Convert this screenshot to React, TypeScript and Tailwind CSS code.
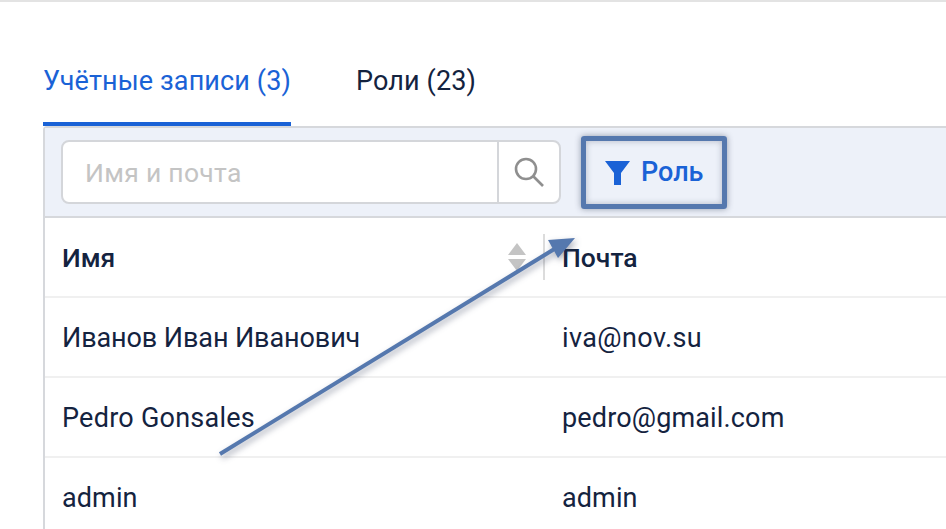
import React from 'react';

const rows = [
  { name: 'Иванов Иван Иванович', mail: 'iva@nov.su', nameClass: 'tracking-[-0.1px]', mailClass: 'tracking-[0.4px]' },
  { name: 'Pedro Gonsales', mail: 'pedro@gmail.com', nameClass: 'tracking-[0.25px]', mailClass: 'tracking-[0.15px]' },
  { name: 'admin', mail: 'admin', nameClass: 'tracking-[0.1px]', mailClass: 'tracking-[0.1px]' },
];

export default function App() {
  return (
    <div className="relative w-[946px] h-[529px] overflow-hidden bg-white font-['Roboto',sans-serif] text-[#14233f]">
      <div className="h-[2px] bg-[#e3e3e3]" />

      {/* Tabs */}
      <div className="flex pl-[43px] pt-[55px] gap-[65px] text-[27px] leading-[48px] tracking-[0.12px]">
        <div className="h-[69px] border-b-[4px] border-[#1a62d6] text-[#1a62d6]">Учётные записи (3)</div>
        <div className="h-[69px]">Роли (23)</div>
      </div>

      {/* Panel */}
      <div className="ml-[43px] border-l-[2px] border-t-[2px] border-[#d6d8dc] rounded-tl-[4px]">
        <div className="flex items-center h-[90px] pl-[16px] bg-[#edf1f9] border-b-[2px] border-[#d6d8dc]">
          <div className="flex w-[500px] h-[64px] bg-white border-[2px] border-[#d4d6da] rounded-[8px]">
            <div className="flex-1 pl-[22px] text-[26.5px] leading-[62px] text-[#c4c4c4] tracking-[0.3px]">Имя и почта</div>
            <div className="flex items-center justify-center w-[62px] border-l-[2px] border-[#d4d6da]">
              <svg width="32" height="32" viewBox="0 0 32 32" fill="none" stroke="#8f8f8f" strokeWidth="2.6">
                <circle cx="13" cy="13" r="10" />
                <path d="M20.5 20.5L30 30" />
              </svg>
            </div>
          </div>
          <div className="flex items-center ml-[20px] w-[146px] h-[73px] pl-[19px] gap-[11px] border-[5px] border-[#5578ae] rounded-[3px] shadow-[0_0_6px_rgba(40,50,80,0.45),inset_0_0_6px_rgba(40,50,80,0.3)] text-[27px] font-medium text-[#1a62d6]">
            <svg width="25" height="25" viewBox="0 0 25 25" fill="#1a62d6">
              <path d="M0 1H25L16 13V25H9V13Z" />
            </svg>
            Роль
          </div>
        </div>

        {/* Table */}
        <div className="flex h-[80px] items-center border-b-[2px] border-[#f0f0f0] text-[26.5px] font-medium">
          <div className="relative flex items-center w-[500px] h-[46px] pl-[17px] pt-[2px]">
            Имя
            <svg className="absolute left-[462px] top-[9px]" width="20" height="28" viewBox="0 0 20 28" fill="#c4c4c4">
              <path d="M10 0L19 12H1Z" />
              <path d="M1 16H19L10 28Z" />
            </svg>
            <div className="absolute right-0 top-0 w-[2px] h-[46px] bg-[#dcdcdc]" />
          </div>
          <div className="pl-[17px] pt-[2px]">Почта</div>
        </div>
        {rows.map((row) => (
          <div key={row.name} className="flex h-[80px] items-center pt-[2px] border-b-[2px] border-[#f0f0f0] text-[27px]">
            <div className={`w-[500px] pl-[17px] ${row.nameClass}`}>{row.name}</div>
            <div className={`pl-[17px] ${row.mailClass}`}>{row.mail}</div>
          </div>
        ))}
      </div>

      {/* Annotation arrow */}
      <svg className="absolute left-0 top-0 drop-shadow-[2px_3px_3px_rgba(40,50,80,0.4)]" width="946" height="529" fill="none">
        <path d="M220 454L556 248" stroke="#5578ae" strokeWidth="4" />
        <path d="M575 238L548 240L558 258Z" fill="#5578ae" />
      </svg>
    </div>
  );
}
